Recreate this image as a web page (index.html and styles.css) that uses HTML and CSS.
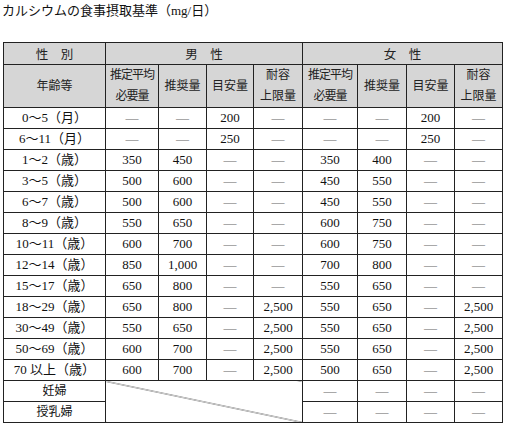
FILE: index.html
```html
<!DOCTYPE html>
<html lang="ja">
<head>
<meta charset="utf-8">
<title>カルシウムの食事摂取基準</title>
<link rel="stylesheet" href="styles.css">
</head>
<body>
<div class="title">カルシウムの食事摂取基準（mg/日）</div>
<table class="tbl">
  <colgroup>
    <col class="c-age"><col class="c1"><col class="c2"><col class="c3"><col class="c4">
    <col class="c5"><col class="c6"><col class="c7"><col class="c8">
  </colgroup>
  <thead>
    <tr class="h1">
      <th class="hd">性　別</th>
      <th class="hd" colspan="4">男　性</th>
      <th class="hd" colspan="4">女　性</th>
    </tr>
    <tr class="h2">
      <th class="hd">年齢等</th>
      <th class="hd narrow">推定平均<br>必要量</th>
      <th class="hd g">推奨量</th>
      <th class="hd">目安量</th>
      <th class="hd g">耐容<br>上限量</th>
      <th class="hd narrow">推定平均<br>必要量</th>
      <th class="hd">推奨量</th>
      <th class="hd g">目安量</th>
      <th class="hd g">耐容<br>上限量</th>
    </tr>
  </thead>
  <tbody>
    <tr><td>0～5（月）</td><td class="d">—</td><td class="d g">—</td><td>200</td><td class="d g">—</td><td class="d">—</td><td class="d">—</td><td class="g">200</td><td class="d g">—</td></tr>
    <tr><td>6～11（月）</td><td class="d">—</td><td class="d g">—</td><td>250</td><td class="d g">—</td><td class="d">—</td><td class="d">—</td><td class="g">250</td><td class="d g">—</td></tr>
    <tr><td>1～2（歳）</td><td>350</td><td class="g">450</td><td class="d">—</td><td class="d g">—</td><td>350</td><td>400</td><td class="d g">—</td><td class="d g">—</td></tr>
    <tr><td>3～5（歳）</td><td>500</td><td class="g">600</td><td class="d">—</td><td class="d g">—</td><td>450</td><td>550</td><td class="d g">—</td><td class="d g">—</td></tr>
    <tr><td>6～7（歳）</td><td>500</td><td class="g">600</td><td class="d">—</td><td class="d g">—</td><td>450</td><td>550</td><td class="d g">—</td><td class="d g">—</td></tr>
    <tr><td>8～9（歳）</td><td>550</td><td class="g">650</td><td class="d">—</td><td class="d g">—</td><td>600</td><td>750</td><td class="d g">—</td><td class="d g">—</td></tr>
    <tr><td>10～11（歳）</td><td>600</td><td class="g">700</td><td class="d">—</td><td class="d g">—</td><td>600</td><td>750</td><td class="d g">—</td><td class="d g">—</td></tr>
    <tr><td>12～14（歳）</td><td>850</td><td class="g">1,000</td><td class="d">—</td><td class="d g">—</td><td>700</td><td>800</td><td class="d g">—</td><td class="d g">—</td></tr>
    <tr><td>15～17（歳）</td><td>650</td><td class="g">800</td><td class="d">—</td><td class="d g">—</td><td>550</td><td>650</td><td class="d g">—</td><td class="d g">—</td></tr>
    <tr class="rg"><td>18～29（歳）</td><td>650</td><td class="g">800</td><td class="d">—</td><td class="g">2,500</td><td>550</td><td>650</td><td class="d g">—</td><td class="g">2,500</td></tr>
    <tr><td>30～49（歳）</td><td>550</td><td class="g">650</td><td class="d">—</td><td class="g">2,500</td><td>550</td><td>650</td><td class="d g">—</td><td class="g">2,500</td></tr>
    <tr class="rg"><td>50～69（歳）</td><td>600</td><td class="g">700</td><td class="d">—</td><td class="g">2,500</td><td>550</td><td>650</td><td class="d g">—</td><td class="g">2,500</td></tr>
    <tr class="rg"><td>70 以上（歳）</td><td>600</td><td class="g">700</td><td class="d">—</td><td class="g">2,500</td><td>500</td><td>650</td><td class="d g">—</td><td class="g">2,500</td></tr>
    <tr class="rg"><td class="jp">妊婦</td><td class="diag" colspan="4" rowspan="2"></td><td class="d">—</td><td class="d">—</td><td class="d g">—</td><td class="d g">—</td></tr>
    <tr class="rg last"><td class="jp">授乳婦</td><td class="d">—</td><td class="d">—</td><td class="d g">—</td><td class="d g">—</td></tr>
  </tbody>
</table>
</body>
</html>
```
FILE: styles.css
```css
html, body {
  margin: 0;
  padding: 0;
  background: #ffffff;
}

body {
  font-family: "Liberation Serif", "Noto Sans CJK JP", serif;
  color: #111;
}

.title {
  font-size: 13px;
  line-height: 18px;
  padding: 2px 0 0 2px;
  height: 20px;
}

.tbl {
  margin: 20px 0 0 3px;
  border-collapse: collapse;
  table-layout: fixed;
  width: 500px;
  font-size: 13px;
  border: 1px solid #222;
}

.c-age { width: 102px; }
.c1 { width: 53px; }
.c2 { width: 48px; }
.c3 { width: 47px; }
.c4 { width: 49px; }
.c5 { width: 55px; }
.c6 { width: 49px; }
.c7 { width: 48px; }
.c8 { width: 48px; }

.tbl th,
.tbl td {
  border: 1px solid #222;
  padding: 0;
  text-align: center;
  vertical-align: middle;
  font-weight: normal;
  white-space: nowrap;
  overflow: hidden;
}

.tbl td.g,
.tbl th.g {
  border-left-color: #8a8a8a;
}

.tbl tr.rg td {
  border-top-color: #8a8a8a;
}

.tbl tr.h1 th {
  height: 21px;
  font-size: 12.5px;
}

.tbl tr.h2 th {
  height: 41px;
  font-size: 12px;
  line-height: 21px;
}

.hd {
  background: #d6d6d6;
  color: #222;
}

.narrow {
  letter-spacing: -1px;
}

.tbl tbody td {
  height: 20px;
  line-height: 20px;
}

.tbl tbody td.jp {
  font-size: 12px;
}

.d {
  color: #666;
}

.diag {
  background: linear-gradient(to top right, transparent calc(50% - 0.7px), #555 50%, transparent calc(50% + 0.7px));
}
```
